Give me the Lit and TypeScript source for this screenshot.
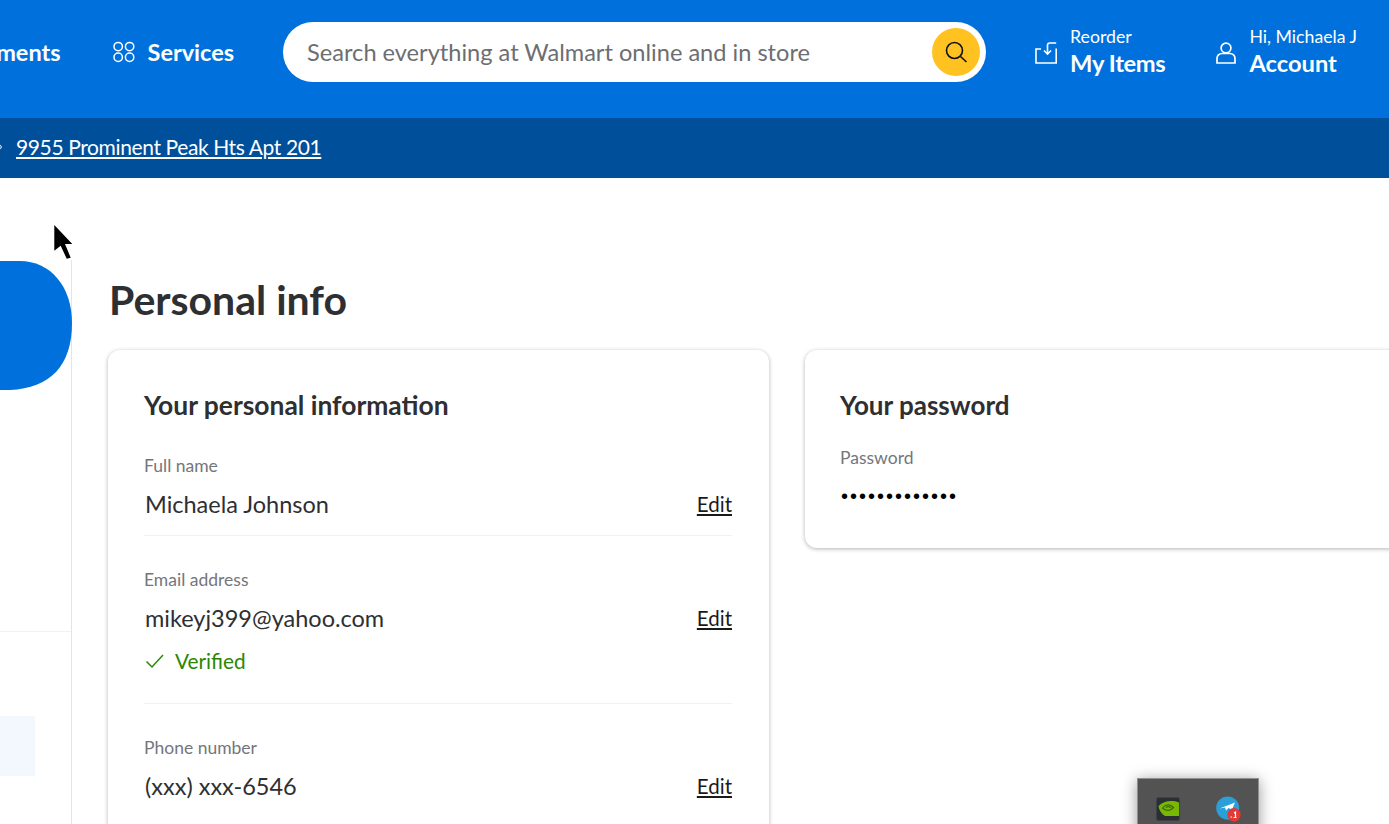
import { LitElement, html, css } from "lit";
import { customElement } from "lit/decorators.js";

@customElement("app-root")
export class AppRoot extends LitElement {
  static styles = css`
    :host { display: block; position: relative; width: 100%; height: 824px; overflow: hidden; background: #fff; color: #2e2f32; font-family: Lato, "Noto Sans", sans-serif; }
    a { color: inherit; }
    .top { height: 118px; background: #0071dc; color: #fff; display: flex; justify-content: flex-end; align-items: flex-start; padding-right: 32px; box-sizing: border-box; }
    .nav { display: flex; align-items: center; height: 104px; font-size: 23.5px; font-weight: 700; white-space: nowrap; }
    .frag { margin-right: 52px; }
    .grid-ico { margin-right: 13px; display: block; }
    .search { width: 703px; height: 60px; margin: 22px 49px 0 49px; flex: none; background: #fff; border-radius: 30px; display: flex; align-items: center; justify-content: space-between; box-sizing: border-box; padding: 0 6px 0 24px; font-size: 23.6px; color: #6d6e71; white-space: nowrap; }
    .go { width: 48px; height: 48px; border-radius: 50%; background: #ffc220; display: flex; align-items: center; justify-content: center; }
    .link { display: flex; align-items: center; height: 104px; flex: none; }
    .link.items { margin-right: 51px; }
    .link svg { margin-right: 13px; display: block; margin-top: 2px; }
    .sub { font-size: 17.7px; line-height: 22px; }
    .main-l { font-size: 23.7px; font-weight: 700; line-height: 30px; }
    .main-l.tight { letter-spacing: -0.35px; }
    .bar { height: 60px; background: #004f9a; color: #fff; display: flex; align-items: center; font-size: 21px; letter-spacing: -0.38px; padding-bottom: 3px; box-sizing: border-box; }
    .bar svg { display: block; flex: none; }
    .bar a { margin-left: 14px; }
    .body { display: flex; }
    .side { width: 72px; flex: none; margin-top: 82px; height: 564px; box-sizing: border-box; border-right: 1px solid #e3e4e5; position: relative; }
    .blob { display: block; width: 72px; height: 129px; margin-top: 1px; margin-right: -1px; }
    .rule { height: 1px; background: #f0f1f2; margin-top: 241px; }
    .pale { width: 35px; height: 60px; margin-top: 84px; background: #f2f8fd; }
    .content { flex: 1; min-width: 0; padding: 97px 0 0 36px; }
    h1 { margin: 0 0 25px 1px; font-size: 41px; line-height: 50px; font-weight: 700; }
    .cards { display: flex; gap: 36px; align-items: flex-start; }
    .card { background: #fff; border-radius: 12px; box-shadow: 0 1px 4px rgba(0,0,0,.3); padding: 36px; box-sizing: border-box; flex: none; }
    .c1 { width: 661px; height: 600px; padding-right: 37px; }
    .c2 { width: 640px; height: 198px; padding-left: 35px; }
    h2 { margin: 0; font-size: 26px; line-height: 38px; font-weight: 700; }
    .c1 h2 { margin-bottom: 31px; font-size: 26.4px; }
    .c2 h2 { margin-bottom: 23px; }
    .label { font-size: 17.5px; line-height: 22px; color: #74767c; }
    .val { font-size: 23.5px; line-height: 30px; margin-top: 12px; padding-left: 1px; color: #2e2f32; display: flex; justify-content: space-between; align-items: center; }
    .val a { font-size: 20.5px; color: #1a1a1a; }
    .field { border-bottom: 1px solid #f0f1f2; padding-bottom: 16px; margin-bottom: 33px; }
    .field:last-child { border-bottom: none; }
    .ok { display: flex; align-items: center; gap: 10px; color: #2a8703; font-size: 20.8px; line-height: 26px; margin-top: 15px; margin-bottom: 13px; padding-left: 1px; }
    .dots { font-size: 20px; letter-spacing: 2px; color: #000; line-height: 28px; margin-top: 13px; font-family: "Liberation Sans", sans-serif; padding-left: 1px; }
    .cursor { position: absolute; left: 50px; top: 222px; display: block; }
    .tray { position: absolute; left: 1137px; top: 778px; width: 122px; height: 60px; background: #535353; border: 1px solid #909090; box-sizing: border-box; box-shadow: 0 2px 14px rgba(0,0,0,.4); display: flex; gap: 36px; padding: 18px 0 0 18px; }
    .tray svg { display: block; flex: none; overflow: visible; }
  `;

  render() {
    return html`
      <div class="top">
        <div class="nav"><span class="frag">ments</span>
          <svg class="grid-ico" width="22" height="22" viewBox="0 0 22 22" fill="none" stroke="#fff" stroke-width="1.5"><circle cx="5.2" cy="5.6" r="4.2"/><circle cx="16.6" cy="5.600" r="4.2"/><circle cx="5.2" cy="16.2" r="4.2"/><circle cx="16.6" cy="16.2" r="4.2"/></svg>
          <span>Services</span>
        </div>
        <div class="search">
          <span>Search everything at Walmart online and in store</span>
          <span class="go"><svg width="24" height="24" viewBox="0 0 24 24" fill="none" stroke="#111" stroke-width="1.6"><circle cx="10.5" cy="10.5" r="8"/><path d="M16.5 16.5l6 5.5"/></svg></span>
        </div>
        <div class="link items">
          <svg width="22" height="22" viewBox="0 0 22 22" fill="none" stroke="#fff" stroke-width="1.6"><path d="M21.2 1H14.5a2 2 0 0 0-2 2v8.5M9 8.5l3.500 3.500 3.500-3.500M6 7H1v14h20.200V6.500"/></svg>
          <div><div class="sub">Reorder</div><div class="main-l tight">My Items</div></div>
        </div>
        <div class="link">
          <svg width="20" height="22" viewBox="0 0 20 22" fill="none" stroke="#fff" stroke-width="1.7"><circle cx="10" cy="6" r="4.9"/><path d="M1 21v-4.500a5 5 0 0 1 5-5h8a5 5 0 0 1 5 5V21z"/></svg>
          <div><div class="sub">Hi, Michaela J</div><div class="main-l">Account</div></div>
        </div>
      </div>
      <div class="bar">
        <svg width="2" height="8" viewBox="0 0 2 8" fill="none" stroke="#cfd8e3" stroke-width="1.2"><path d="M0 2l1.500 2L0 6"/></svg>
        <a href="#">9955 Prominent Peak Hts Apt 201</a>
      </div>
      <div class="body">
        <div class="side">
          <svg class="blob" viewBox="0 0 72 129"><path d="M0 0H20C50 0 72 25 72 62C72 105 50 127 10 129L0 129Z" fill="#0071dc"/></svg>
          <div class="rule"></div>
          <div class="pale"></div>
        </div>
        <div class="content">
          <h1>Personal info</h1>
          <div class="cards">
            <div class="card c1">
              <h2>Your personal information</h2>
              <div class="field"><div class="label">Full name</div><div class="val"><span>Michaela Johnson</span><a href="#">Edit</a></div></div>
              <div class="field"><div class="label">Email address</div><div class="val"><span>mikeyj399@yahoo.com</span><a href="#">Edit</a></div>
                <div class="ok"><svg width="20" height="16" viewBox="0 0 20 16" fill="none" stroke="#2a8703" stroke-width="1.5"><path d="M1.500 8.500l5.500 5.500L18 2"/></svg>Verified</div></div>
              <div class="field"><div class="label">Phone number</div><div class="val"><span>(xxx) xxx-6546</span><a href="#">Edit</a></div></div>
            </div>
            <div class="card c2">
              <h2>Your password</h2>
              <div class="label">Password</div>
              <div class="dots">•••••••••••••</div>
            </div>
          </div>
        </div>
      </div>
      <svg class="cursor" width="26" height="40" viewBox="0 0 26 40"><path d="M4.300 3v25.700l6.400-5 6 13 4-1-5.700-13.700h7.300z" fill="#000"/></svg>
      <div class="tray">
        <svg width="24" height="24" viewBox="0 0 24 24"><rect x=".5" y=".5" width="23" height="23" rx="2" fill="#2b2f33" stroke="#3c4248"/><path d="M2.500 9C8 3.500 16 3 23 5.500V19H9C5.500 17 3 13 2.500 9z" fill="#76b900"/><path d="M6.500 11c3-4 8-4 11-.5-3 3.500-7 4-11 .5zM10 10.500c2-1.500 4-1 5 .5" fill="none" stroke="#3f6a08" stroke-width="1.200"/></svg>
        <svg width="24" height="24" viewBox="0 0 24 24"><circle cx="11.700" cy="11" r="11.500" fill="#2a9fd8"/><path d="M3.500 11.500L19 5.500l-3 7-3.500-1.500-2.500 2.500-1-3z" fill="#fff"/><circle cx="18" cy="17.700" r="6.700" fill="#e53935"/><path d="M14.500 20h1.500M17.500 20.500h3M19.500 20.500V15l-1.500 1" stroke="#fff" stroke-width="1.200" fill="none"/></svg>
      </div>
    `;
  }
}
